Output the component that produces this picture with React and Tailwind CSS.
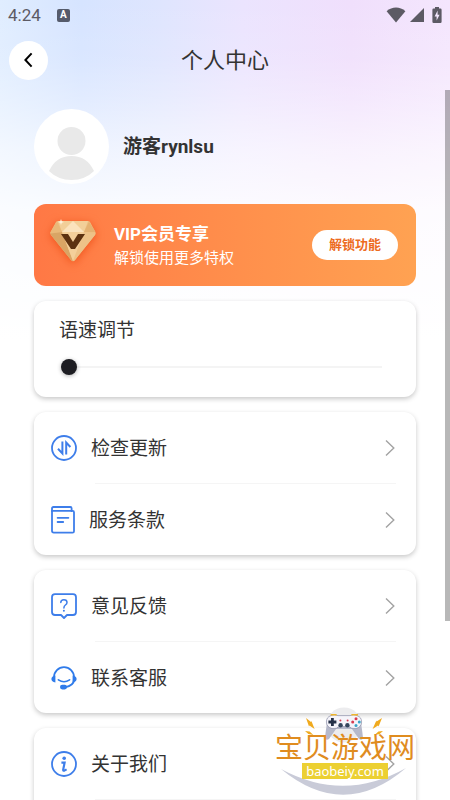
import React, { useState } from 'react';

// --- ICONS ---
function WifiIcon() {
  return (
    <svg width="20" height="16" viewBox="0 0 20 16" fill="currentColor">
      <path d="M0.6 4.2C6-0.6 14-0.6 19.4 4.2L10 15.6Z" />
    </svg>
  );
}

function SignalIcon() {
  return (
    <svg width="14" height="14" viewBox="0 0 14 14" fill="currentColor">
      <path d="M14 0V14H0Z" />
    </svg>
  );
}

function BatteryIcon() {
  return (
    <svg width="10" height="16" viewBox="0 0 10 16">
      <path d="M3 0H7V1.6H8.4Q9.6 1.6 9.6 2.8V14.8Q9.6 16 8.4 16H1.6Q.4 16 .4 14.8V2.8Q.4 1.6 1.6 1.6H3Z" fill="currentColor" />
      <path d="M5.6 3.6L2.6 9.4H4.6V13.6L7.6 7.8H5.6Z" fill="#f2e6fc" />
    </svg>
  );
}

function UpdateIcon() {
  return (
    <svg width="26" height="26" viewBox="0 0 26 26" fill="none" stroke="#3e7eea" strokeWidth="1.8">
      <circle cx="13" cy="13" r="12" />
      <path d="M11.4 6.4V18.4L7 13.8" strokeWidth="2" />
      <path d="M15.2 19.4V7.6L19.4 12" strokeWidth="2" />
    </svg>
  );
}

function TermsIcon() {
  return (
    <svg width="24" height="28" viewBox="0 0 24 28" fill="none" stroke="#3e7eea" strokeWidth="1.8" strokeLinejoin="round" strokeLinecap="round">
      <path d="M1 5.2V2.4Q1 1 2.4 1H19.4Q20.6 1 20.6 2.2V5.2" />
      <path d="M1 4.8H21.6Q23 4.8 23 6.2V25.2Q23 26.6 21.6 26.6H2.8Q1 26.6 1 24.8Z" />
      <path d="M6.6 11.8H17.4M6.6 16H12.2" />
    </svg>
  );
}

function FeedbackIcon() {
  return (
    <svg width="26" height="26" viewBox="0 0 26 26" fill="none" stroke="#3e7eea" strokeWidth="1.8" strokeLinejoin="round" strokeLinecap="round">
      <path d="M4 1.2H22Q25 1.2 25 4.2V19Q25 22 22 22H16L13 25L10 22H4Q1 22 1 19V4.2Q1 1.2 4 1.2Z" />
      <path d="M9.8 9.6Q9.8 6.8 12.9 6.8Q16 6.8 16 9.4Q16 10.8 14.4 12Q12.9 13.1 12.9 15" strokeWidth="1.5" />
      <circle cx="12.9" cy="17.8" r="1" fill="#3e7eea" stroke="none" />
    </svg>
  );
}

function ServiceIcon() {
  return (
    <svg width="26" height="26" viewBox="0 0 26 26" fill="none" stroke="#2f7bea" strokeWidth="1.8" strokeLinecap="round">
      <path d="M3 14.6V12.2A10 10 0 0 1 23 12.2V14.6Q23 20.6 14 22.4" />
      <path d="M7.4 14.8Q13 18.6 18.6 14.8" strokeWidth="1.6" />
      <path d="M4.4 10.8V17.4Q.4 17 .4 14.1T4.4 10.8ZM21.6 10.8V17.4Q25.6 17 25.6 14.1T21.6 10.8Z" fill="#2f7bea" stroke="none" />
      <rect x="9" y="19.8" width="7" height="4.6" rx="2.3" fill="#2f7bea" stroke="none" />
    </svg>
  );
}

function AboutIcon() {
  return (
    <svg width="26" height="26" viewBox="0 0 26 26" fill="none" stroke="#3e7eea" strokeWidth="1.8">
      <circle cx="13" cy="13" r="12" />
      <circle cx="13.2" cy="7.2" r="1.8" fill="#3e7eea" stroke="none" />
      <path d="M10.4 11.6H13.6L12.2 18.6Q12 20 13.4 19.6L15.6 18.4" strokeWidth="2.2" />
    </svg>
  );
}

function ChevronIcon() {
  return (
    <svg className="ml-auto" width="10" height="18" viewBox="0 0 10 18" fill="none" stroke="#a3a3a3" strokeWidth="1.4">
      <path d="M1 1.4L8.8 9L1 16.6" />
    </svg>
  );
}

function DiamondIcon() {
  return (
    <svg className="mt-4 self-start overflow-visible drop-shadow-[0_2px_4px_#f0561e]" width="46" height="42" viewBox="0 0 46 42">
      <path d="M8 1H38Q39 1 40 2L45.4 12Q46 13.4 45 15L25 40Q23 42.4 21 40L1 15Q0 13.4 .6 12L6 2Q7 1 8 1Z" fill="#eec083" />
      <path d="M8 1H38L34 12H12Z" fill="#f2cf98" />
      <path d="M23 1L34 12H12Z" fill="#fbe3bd" />
      <path d="M7 1.4L12 12L.6 13.4Q0 13 .8 11.6Z" fill="#e9b979" />
      <path d="M39 1.4L45.4 12L34 12Z" fill="#e4b272" />
      <path d="M.4 13.6L12 12L23 41Q22 41.4 21 40L1 15Z" fill="#d9a565" />
      <path d="M45.6 13.6L34 12L23 41Q24 41.4 25 40L45 15Z" fill="#edc288" />
      <path d="M12 12H34L23 41Z" fill="#f4cf9a" />
      <path d="M11 14H18L23 22L28 14H35L25 29H21Z" fill="#5d3210" />
      <path d="M11 -1L11.8 1.2L14 2L11.8 2.8L11 5L10.2 2.8L8 2L10.2 1.2Z" fill="#fff3dc" />
    </svg>
  );
}

// --- COMPONENT: MenuCard ---
function MenuCard({ items, children }) {
  return (
    <nav className="shrink-0 rounded-xl bg-white shadow-[0_2px_5px_rgba(0,0,0,0.22)]">
      {items.map((item, i) => (
        <React.Fragment key={item.label}>
          {i > 0 && <div className="mr-5 ml-[61px] h-px bg-[#f5f5f5]" />}
          <a href="#" className="flex h-[71px] items-center gap-[14px] pr-[21px] pl-[17px]">
            <item.icon />
            <span className="pt-0.5 text-[19px] leading-7">{item.label}</span>
            <ChevronIcon />
          </a>
        </React.Fragment>
      ))}
      {children}
    </nav>
  );
}

// --- COMPONENT: SiteBadge ---
function SiteBadge() {
  return (
    <div className="pointer-events-none absolute right-[34px] bottom-[5px] h-[88px] w-[142px]">
      <svg className="absolute inset-0" width="142" height="88" viewBox="0 0 142 88">
        <path d="M7 62Q70 114 132 61Q70 96 7 62Z" fill="#c9cbd8" />
        <circle cx="70" cy="18" r="17.5" fill="#ececee" />
        <path d="M56 9Q60 6.4 64 9H76Q80 6.4 84 9Q87 11 89 31Q88 34 85 32L78 22H62L55 32Q52 34 51 31Q53 11 56 9Z" fill="#b6b9ca" />
        <path d="M57 8.6Q60 7 64 8.6H76Q80 7 83 8.6Q87.6 10 87.6 15T82 21.6Q77 22 75 19.6H65Q63 22 58 21.6Q52.4 20 52.4 15T57 8.6Z" fill="#f5f4fa" stroke="#8b8ea6" strokeWidth=".7" />
        <path d="M56.6 7.8H62.6M77.4 7.8H84" stroke="#efb52c" strokeWidth="1.6" />
        <path d="M58.4 11V19M54.4 15H62.4" stroke="#253148" strokeWidth="2.8" />
        <circle cx="82" cy="11.8" r="1.5" fill="#d93b50" />
        <circle cx="82" cy="18.4" r="1.5" fill="#3ba5c9" />
        <circle cx="78.7" cy="15.1" r="1.5" fill="#d93b50" />
        <circle cx="85.3" cy="15.1" r="1.5" fill="#3ba5c9" />
        <circle cx="66.4" cy="13.4" r="1" fill="#d93b50" />
        <circle cx="73.6" cy="13.4" r="1" fill="#d93b50" />
        <circle cx="66.6" cy="18.2" r="2.2" fill="#34455c" />
        <circle cx="73.4" cy="18.2" r="2.2" fill="#34455c" />
        <path d="M32 11L37 15L37.4 14L40.6 22L35.4 18.4L35 19.4ZM31 24L35.6 24.6L39.4 28L34.4 27ZM108 11L102.6 14.6L102.4 13.6L98.6 22L104 18.6L104.6 19.6ZM109 24L104.4 24.6L100.6 28L105.6 27Z" fill="#f0aa1e" />
      </svg>
      <div className="relative flex flex-col items-center pt-7">
        <span className="text-[28px] leading-7 text-[#e08c1f]">宝贝游戏网</span>
        <span className="bg-[#ecd032] px-1 font-['Noto_Sans'] text-[13px] leading-4 text-white">baobeiy.com</span>
      </div>
    </div>
  );
}

const updateItems = [
  { label: '检查更新', icon: UpdateIcon },
  { label: '服务条款', icon: TermsIcon },
];

const supportItems = [
  { label: '意见反馈', icon: FeedbackIcon },
  { label: '联系客服', icon: ServiceIcon },
];

const aboutItems = [{ label: '关于我们', icon: AboutIcon }];

export default function App() {
  const [speed, setSpeed] = useState(0);

  return (
    <div
      lang="zh-CN"
      className="relative flex h-screen flex-col overflow-hidden bg-[linear-gradient(to_bottom,rgba(255,255,255,0),rgba(255,255,255,0.1)_60px,rgba(255,255,255,0.3)_100px,rgba(255,255,255,0.6)_150px,rgba(255,255,255,0.85)_210px,#fff_340px),linear-gradient(to_right,#e0edff,#d6e4ff_18%,#dfe5fe_36%,#ebe4fe_54%,#f0dffc_78%,#f4e6fd)] font-[Roboto,'Noto_Sans_CJK_SC',sans-serif] text-[#333]"
    >
      <div className="flex h-[30px] shrink-0 items-center px-2 text-[#5c5a64]">
        <span className="text-[17px] leading-5">4:24</span>
        <span className="ml-4 flex h-[13px] w-[13px] items-center justify-center rounded-xs bg-[#555b6b] text-[10px] leading-3 font-bold text-white">A</span>
        <div className="ml-auto flex items-center">
          <WifiIcon />
          <span className="ml-1"><SignalIcon /></span>
          <span className="ml-2"><BatteryIcon /></span>
        </div>
      </div>

      <header className="flex h-[60px] shrink-0 items-center justify-between px-[9px]">
        <button type="button" aria-label="返回" className="flex h-[39px] w-[39px] items-center justify-center rounded-full bg-white text-black">
          <svg width="10" height="16" viewBox="0 0 10 16" fill="none" stroke="currentColor" strokeWidth="2">
            <path d="M7.6 1.4L1.4 8L7.6 14.6" />
          </svg>
        </button>
        <h1 className="pt-0.5 text-[22px] leading-8">个人中心</h1>
        <div className="w-[39px]" />
      </header>

      <main className="flex min-h-0 flex-1 flex-col gap-[15px] overflow-hidden px-[34px] pt-[19px]">
        <div className="mb-[5px] flex shrink-0 items-center gap-[14px]">
          <svg width="75" height="75" viewBox="0 0 75 75">
            <circle cx="37.5" cy="37.5" r="37.5" fill="#fff" />
            <circle cx="37.5" cy="32" r="14" fill="#e9e9e9" />
            <path d="M15 62Q22 47 37.5 47T60 62Q51 71 37.5 71T15 62Z" fill="#e9e9e9" />
          </svg>
          <span className="text-[19px] leading-7 font-bold">游客rynlsu</span>
        </div>

        <section className="flex h-[82px] shrink-0 items-center rounded-xl bg-linear-to-r from-[#ff7845] to-[#ffa252] pr-[18px] pl-4 text-white">
          <DiamondIcon />
          <div className="ml-[18px] flex-1 pt-0.5">
            <h2 className="text-[17px] leading-6 font-bold">VIP会员专享</h2>
            <p className="text-[15px] leading-6">解锁使用更多特权</p>
          </div>
          <button type="button" className="h-[30px] w-[86px] rounded-full bg-white text-[13px] font-bold text-[#ed6c1f]">
            解锁功能
          </button>
        </section>

        <section className="h-24 shrink-0 rounded-xl bg-white pt-4 pr-[34px] pl-[25px] shadow-[0_2px_5px_rgba(0,0,0,0.22)]">
          <label htmlFor="speed" className="block text-[19px] leading-7">语速调节</label>
          <input
            id="speed"
            type="range"
            min="0"
            max="100"
            value={speed}
            onChange={(e) => setSpeed(Number(e.target.value))}
            className="mt-[14px] block h-4 w-full appearance-none bg-transparent pl-[2px] [&::-webkit-slider-runnable-track]:h-[2px] [&::-webkit-slider-runnable-track]:bg-[#f4f4f4] [&::-webkit-slider-thumb]:-mt-[7px] [&::-webkit-slider-thumb]:h-4 [&::-webkit-slider-thumb]:w-4 [&::-webkit-slider-thumb]:appearance-none [&::-webkit-slider-thumb]:rounded-full [&::-webkit-slider-thumb]:bg-[#1d1d22] [&::-webkit-slider-thumb]:shadow-[0_1px_4px_rgba(0,0,0,0.3)]"
          />
        </section>

        <MenuCard items={updateItems} />
        <MenuCard items={supportItems} />
        <MenuCard items={aboutItems}>
          <div className="mr-5 mb-[71px] ml-[61px] h-px bg-[#f5f5f5]" />
        </MenuCard>
      </main>

      {/* scroll indicator */}
      <div className="absolute top-[90px] right-0 h-[531px] w-[5px] bg-black/28" />
      <SiteBadge />
    </div>
  );
}
